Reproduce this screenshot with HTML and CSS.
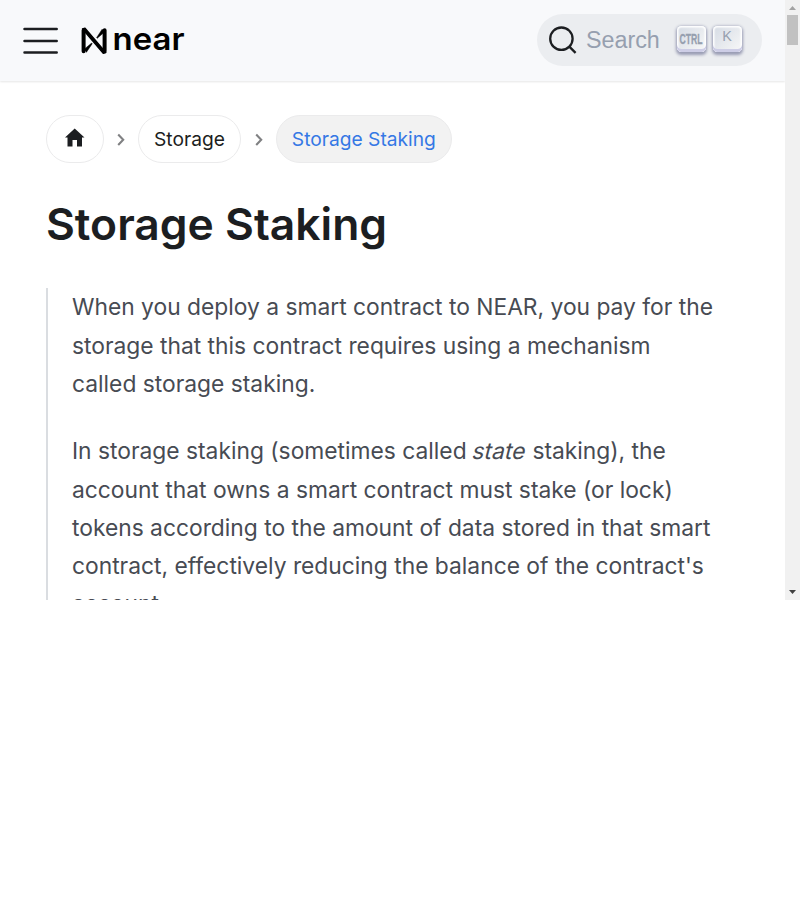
FILE: index.html
```
<!DOCTYPE html>
<html lang="en">
<head>
<meta charset="utf-8">
<title>Storage Staking</title>
<link rel="stylesheet" href="styles.css">
</head>
<body>
<div class="viewport">
  <div class="page">
    <header class="navbar">
      <svg class="menu" width="36" height="30" viewBox="0 0 36 30"><path d="M1.500 3H33.700M1.500 15H33.700M1.500 26.500H33.700" fill="none" stroke="#1c1e21" stroke-width="2.500" stroke-linecap="round"/></svg>
      <svg class="logo" width="110" height="34" viewBox="0 0 110 34">
        <path d="M3.600 6.200V27.200M24.600 6.200V27.200" stroke="#000" stroke-width="4" stroke-linecap="round"/>
        <path d="M2.600 4.900 5 4.200 25.700 28.500 23.300 29.200Z" fill="#000" stroke="#000" stroke-width="1.500" stroke-linejoin="round"/>
        <path d="M22.300 5 16.600 13.700 17.200 14.300 24.300 8.200M6.300 28.400 12.200 19.700 11.600 19.100 4.300 25.200" fill="#000" stroke="#000" stroke-width=".5"/>
        <text class="wordmark" x="32.500" y="25.500" textLength="72" lengthAdjust="spacingAndGlyphs">near</text>
      </svg>
      <div class="search">
        <svg width="30" height="30" viewBox="0 0 30 30"><circle cx="13.400" cy="13.700" r="11.200" fill="none" stroke="#1c1e21" stroke-width="2.300"/><path d="m21.300 21.600 6.300 6.300" stroke="#1c1e21" stroke-width="2.300"/></svg>
        <span class="placeholder">Search</span>
        <kbd><svg width="29" height="24" viewBox="0 0 29 24"><text class="ctrl" x="2.500" y="17.500" textLength="23" lengthAdjust="spacingAndGlyphs">CTRL</text></svg></kbd>
        <kbd>K</kbd>
      </div>
    </header>
    <main>
      <nav class="crumbs">
        <span class="crumb home"><svg width="20" height="20" viewBox="0 0 20 20"><path d="M9.700 .5 19.500 9.500H17V18.500H12V12H7.500V18.500H2.500V9.500H0Z" fill="#1c1e21"/></svg></span>
        <svg class="sep" width="8" height="14" viewBox="0 0 8 14"><path d="m1.200 1.500 5 5.200-5 5.200" fill="none" stroke="#808183" stroke-width="2.100"/></svg>
        <span class="crumb">Storage</span>
        <svg class="sep last" width="8" height="14" viewBox="0 0 8 14"><path d="m1.200 1.500 5 5.200-5 5.200" fill="none" stroke="#808183" stroke-width="2.100"/></svg>
        <span class="crumb active">Storage Staking</span>
      </nav>
      <h1>Storage Staking</h1>
      <blockquote>
        <p>When you deploy a smart contract to NEAR, you pay for the<br>storage that this contract requires using a mechanism<br>called storage staking.</p>
        <p class="detail">In storage staking (sometimes called <em>state</em> staking), the<br>account that owns a smart contract must stake (or lock)<br>tokens according to the amount of data stored in that smart<br>contract, effectively reducing the balance of the contract's<br>account.</p>
      </blockquote>
    </main>
  </div>
  <div class="scrollbar">
    <svg width="15" height="15" viewBox="0 0 15 15"><path d="M4 10 7.500 6 11 10Z" fill="#a3a3a3"/></svg>
    <div class="thumb"></div>
    <svg class="down" width="15" height="15" viewBox="0 0 15 15"><path d="M4 5 7.500 9 11 5Z" fill="#404040"/></svg>
  </div>
</div>
</body>
</html>
```
FILE: styles.css
```
* { box-sizing: border-box; }
body { margin: 0; background: #fff; font-family: Inter, "Liberation Sans", sans-serif; color: #1c1e21; }
.viewport { display: flex; width: 800px; height: 600px; overflow: hidden; }
.page { width: 785px; height: 600px; overflow: hidden; }
.navbar { display: flex; align-items: center; height: 81px; padding: 0 23px; background: #f8f9fb; box-shadow: 0 1px 2px rgba(0,0,0,.1); }
svg { display: block; flex: none; overflow: visible; }
.logo { margin: 0 0 0 21px; }
.wordmark { font: 600 31.500px Inter, sans-serif; }
.search { display: flex; align-items: center; width: 225px; height: 52px; margin: -1px 0 0 auto; padding-left: 11px; border-radius: 26px; background: #ebedf0; }
.placeholder { width: 99px; padding-left: 8px; font: 23.300px/27px "Liberation Sans", sans-serif; color: #969faf; }
kbd { display: flex; flex: none; justify-content: center; width: 29px; height: 26px; margin: -2px 6.500px 0 0; padding-bottom: 3px; border-radius: 4.500px; background: linear-gradient(-225deg, #d5dbe4, #f8f8f8); box-shadow: inset 0 -3px 0 0 #cdcde6, inset 0 0 1.500px 1.500px #fff, 0 1.500px 3px 1px rgba(30,35,90,.4); color: #969faf; font: 14.400px/20px "Liberation Sans", sans-serif; }
.ctrl { font: 700 15px "Liberation Sans", sans-serif; fill: #969faf; stroke: #969faf; stroke-width: .3px; }
main { padding: 34px 46px 0; }
.crumbs { display: flex; align-items: center; height: 48px; }
.crumb { display: flex; align-items: center; height: 48px; padding: 0 15px; border: 1px solid #ebebec; border-radius: 24px; font-size: 19.200px; line-height: 30px; white-space: nowrap; }
.home { width: 58px; padding: 0 18px; }
.home svg { margin-top: -3px; }
.sep { margin: 2px 13px 0; }
.last { margin: 2px 13px 0 14px; }
.active { background: #f2f2f2; color: #3578e5; }
h1 { margin: 31px 0 34px; font-size: 44.400px; line-height: 60px; font-weight: 600; }
blockquote { margin: 0; padding: .3px 0 0 24px; border-left: 2px solid #dadde1; color: #474b53; font-size: 22.800px; font-weight: 380; line-height: 38.400px; white-space: nowrap; }
.detail { line-height: 38.250px; }
em { display: inline-block; font-style: normal; transform: skewX(-14deg); }
p { margin: 0 0 28.800px; }
.scrollbar { display: flex; flex-direction: column; align-items: center; width: 15px; background: #f1f1f1; }
.thumb { width: 11px; height: 30px; background: #c1c1c1; }
.down { margin-top: auto; }
```
